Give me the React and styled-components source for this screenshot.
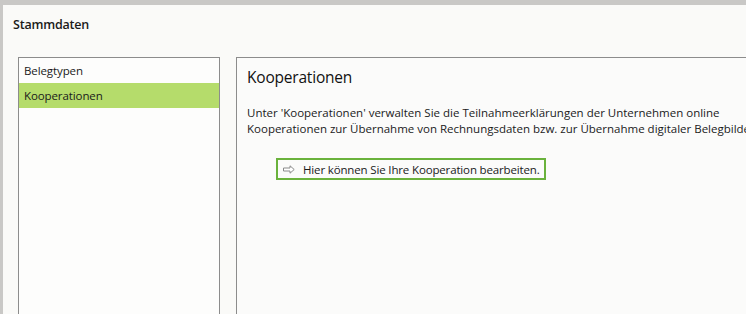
import React from 'react'
import styled, { createGlobalStyle } from 'styled-components'

const GlobalStyle = createGlobalStyle`
    html, body {
        margin: 0;
        background: #c9c8c6;
    }
    body {
        font-family: "Open Sans", "Noto Sans", "Liberation Sans", sans-serif;
        color: #1a1a1a;
    }
`

const Page = styled.div`
    width: 746px;
    height: 314px;
    padding: 5px 0 0 3px;
    box-sizing: border-box;
    overflow: hidden;
`

const Window = styled.div`
    background: #fafaf8;
    height: 100%;
    display: flex;
    flex-direction: column;
`

const Title = styled.div`
    font-size: 12.5px;
    font-weight: 600;
    line-height: 18px;
    padding: 11px 10px 0;
    letter-spacing: -0.2px;
`

const Body = styled.div`
    display: flex;
    gap: 16px;
    padding-left: 15px;
    margin-top: 23px;
    flex: 1;
`

const List = styled.div`
    width: 200px;
    flex: none;
    border: 1px solid #8c8c8c;
    border-bottom: none;
    background: #fdfdfc;
`

const ListItem = styled.div`
    height: 25px;
    line-height: 25px;
    padding-left: 5px;
    font-size: 11.5px;
    letter-spacing: -0.1px;
    background: ${p => (p.active ? '#b5dc6b' : 'transparent')};
`

const Content = styled.div`
    flex: 1;
    min-width: 540px;
    border: 1px solid #8c8c8c;
    border-right: none;
    border-bottom: none;
    background: #fbfbfa;
    padding: 9px 10px;
`

const Heading = styled.h2`
    margin: 0;
    font-size: 15.5px;
    font-weight: 400;
    line-height: 20px;
    letter-spacing: -0.2px;
    color: #111;
`

const Text = styled.p`
    margin: 18px 0 0;
    font-size: 11.5px;
    line-height: 16px;
    white-space: nowrap;
    letter-spacing: 0;
`

const LinkBox = styled.div`
    display: inline-flex;
    align-items: center;
    gap: 8px;
    margin: 21px 0 0 29px;
    height: 18px;
    padding: 0 4px 0 5px;
    border: 2px solid #6ab23c;
    font-size: 11.5px;
    letter-spacing: -0.15px;
    cursor: pointer;
`

const Arrow = () => (
    <svg width="12" height="9" viewBox="0 0 12 9">
        <path
            d="M0.5 3h6.5V0.8L11.2 4.5 7 8.2V6H0.5z"
            fill="#fff"
            stroke="#8a8a8a"
            strokeWidth="1"
            strokeLinejoin="miter"
        />
    </svg>
)

const App = () => {
    return (
        <>
            <GlobalStyle />
            <Page>
                <Window>
                    <Title>Stammdaten</Title>
                    <Body>
                        <List>
                            <ListItem>Belegtypen</ListItem>
                            <ListItem active>Kooperationen</ListItem>
                        </List>
                        <Content>
                            <Heading>Kooperationen</Heading>
                            <Text>
                                Unter 'Kooperationen' verwalten Sie die Teilnahmeerklärungen der Unternehmen online
                                <br />
                                Kooperationen zur Übernahme von Rechnungsdaten bzw. zur Übernahme digitaler Belegbilder.
                            </Text>
                            <LinkBox>
                                <Arrow />
                                Hier können Sie Ihre Kooperation bearbeiten.
                            </LinkBox>
                        </Content>
                    </Body>
                </Window>
            </Page>
        </>
    )
}

export default App
